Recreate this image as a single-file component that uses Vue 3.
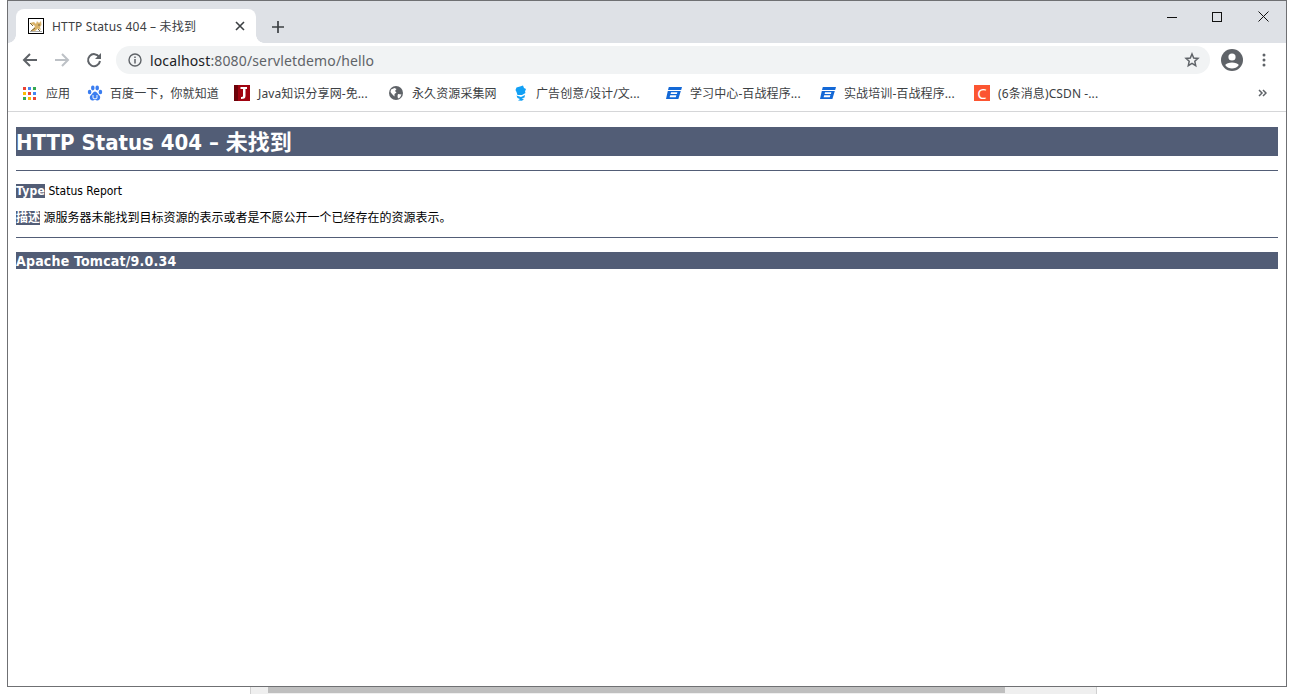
<script setup>
const bookmarks = [
  { id: 'apps', label: '应用', width: 64, gap: 7 },
  { id: 'paw', label: '百度一下，你就知道', width: 147, gap: 7 },
  { id: 'j', label: 'Java知识分享网-免...', width: 155, gap: 8 },
  { id: 'globe', label: '永久资源采集网', width: 125, gap: 7 },
  { id: 'bird', label: '广告创意/设计/文...', width: 152, gap: 6 },
  { id: 'bz', label: '学习中心-百战程序...', width: 154, gap: 8 },
  { id: 'bz', label: '实战培训-百战程序...', width: 154, gap: 8 },
  { id: 'c', label: '(6条消息)CSDN -...', width: 154, gap: 8 },
]
const appColors = ['#ea4335', '#4285f4', '#34a853', '#fbbc05', '#ea4335', '#4285f4', '#34a853', '#fbbc05', '#ea4335']
</script>

<template>
  <div class="screen">
    <div class="window">
      <div class="tabstrip">
        <div class="tab">
          <svg class="favicon" width="16" height="16" viewBox="0 0 16 16">
            <rect x="0.5" y="0.5" width="15" height="15" fill="#fff" stroke="#000" />
            <path d="M2 5 L6 4 L8 6 L9 3 L10 4.5 L12 4.5 L13 2.5 L13.5 7 L12 9 L13 12 L10 10.5 L7 13 L3 13 L6 10 L7 8 Z" fill="#d9b36a" />
            <path d="M2 5 L5 8 M10 7 L12 7 M3 13 L7 10 M10 11 L12 13" stroke="#7a6638" stroke-width="1" fill="none" />
            <path d="M2 13.5 L14 13.5" stroke="#aaa" />
          </svg>
          <span class="tab-title">HTTP Status 404 – 未找到</span>
          <svg class="tab-close" width="10" height="10" viewBox="0 0 10 10">
            <path d="M1 1 L9 9 M9 1 L1 9" stroke="#3c4043" stroke-width="1.6" />
          </svg>
        </div>
        <svg class="new-tab" width="12" height="12" viewBox="0 0 12 12">
          <path d="M6 0 V12 M0 6 H12" stroke="#3c4043" stroke-width="1.7" />
        </svg>
        <div class="win-controls">
          <svg width="10" height="10" viewBox="0 0 10 10"><path d="M0 5.5 H10" stroke="#111" /></svg>
          <svg width="10" height="10" viewBox="0 0 10 10"><rect x="0.5" y="0.5" width="9" height="9" fill="none" stroke="#111" /></svg>
          <svg width="11" height="11" viewBox="0 0 11 11"><path d="M0.5 0.5 L10.5 10.5 M10.5 0.5 L0.5 10.5" stroke="#111" /></svg>
        </div>
      </div>

      <div class="toolbar">
        <svg class="nav" width="16" height="16" viewBox="0 0 16 16">
          <path d="M15 8 H2 M8 2 L2 8 L8 14" fill="none" stroke="#5f6368" stroke-width="2" />
        </svg>
        <svg class="nav" width="16" height="16" viewBox="0 0 16 16">
          <path d="M1 8 H14 M8 2 L14 8 L8 14" fill="none" stroke="#bdc1c6" stroke-width="2" />
        </svg>
        <svg class="nav" width="16" height="16" viewBox="0 0 16 16">
          <path d="M13.2 5 A6 6 0 1 0 14 9" fill="none" stroke="#5f6368" stroke-width="2" />
          <path d="M15 1 V7 H9 Z" fill="#5f6368" />
        </svg>
        <div class="omnibox">
          <svg width="14" height="14" viewBox="0 0 14 14">
            <circle cx="7" cy="7" r="6" fill="none" stroke="#5f6368" stroke-width="1.4" />
            <path d="M7 6 V10.5 M7 3.4 V5" stroke="#5f6368" stroke-width="1.5" />
          </svg>
          <span class="url"><span class="host">localhost</span>:8080/servletdemo/hello</span>
          <svg class="star" width="16" height="16" viewBox="0 0 16 16">
            <path d="M8 2 L9.7 6 L14 6.4 L10.8 9.3 L11.7 13.6 L8 11.3 L4.3 13.6 L5.2 9.3 L2 6.4 L6.3 6 Z" fill="none" stroke="#5f6368" stroke-width="1.5" />
          </svg>
        </div>
        <svg class="avatar" width="22" height="22" viewBox="0 0 22 22">
          <circle cx="11" cy="11" r="11" fill="#5f6368" />
          <circle cx="11" cy="8" r="3.6" fill="#fff" />
          <path d="M4.2 16 C6 12.6 16 12.6 17.8 16 C16 18.6 13.5 19.5 11 19.5 C8.5 19.5 6 18.6 4.2 16 Z" fill="#fff" />
        </svg>
        <svg class="menu" width="4" height="14" viewBox="0 0 4 14">
          <circle cx="2" cy="2" r="1.5" fill="#5f6368" />
          <circle cx="2" cy="7" r="1.5" fill="#5f6368" />
          <circle cx="2" cy="12" r="1.5" fill="#5f6368" />
        </svg>
      </div>

      <div class="bookmarks">
        <div v-for="(b, i) in bookmarks" :key="i" class="bookmark" :style="{ width: b.width + 'px' }">
          <span class="bm-icon" :style="{ marginRight: b.gap + 'px' }">
            <span v-if="b.id === 'apps'" class="apps">
              <i v-for="(c, k) in appColors" :key="k" :style="{ background: c }"></i>
            </span>
            <svg v-else-if="b.id === 'paw'" width="16" height="16" viewBox="0 0 16 16">
              <g fill="#3a7df0">
                <ellipse cx="2.6" cy="7" rx="1.8" ry="2.3" />
                <ellipse cx="5.8" cy="3" rx="1.8" ry="2.4" />
                <ellipse cx="10.2" cy="3" rx="1.8" ry="2.4" />
                <ellipse cx="13.4" cy="7" rx="1.8" ry="2.3" />
                <path d="M8 6.5 C10 6.5 10.5 9 12.5 10.5 C14 12 13 15.5 10.5 15.5 C9.5 15.5 9 15 8 15 C7 15 6.5 15.5 5.5 15.5 C3 15.5 2 12 3.5 10.5 C5.5 9 6 6.5 8 6.5 Z" />
              </g>
              <path d="M6 10 V12.5 C6 14.4 10 14.4 10 12.5 V10" fill="none" stroke="#d6e4fc" stroke-width="1.2" />
            </svg>
            <svg v-else-if="b.id === 'j'" width="16" height="16" viewBox="0 0 16 16">
              <rect width="16" height="16" fill="#a00310" />
              <rect width="4" height="16" fill="#6d0209" />
              <path d="M6.5 2 H13 V4 H11.5 V11 C11.5 13.4 9.8 14 7 14 V12 C8.6 12 9 11.6 9 10.5 V4 H6.5 Z" fill="#fff" />
            </svg>
            <svg v-else-if="b.id === 'globe'" width="14" height="14" viewBox="0 0 14 14">
              <circle cx="7" cy="7" r="7" fill="#5f6368" />
              <path d="M2 3.5 L5.5 2 L7.5 3 L6 5 L7.5 6.5 L5.5 8 L5.5 10.5 L3 8 L1.5 6 Z M9 8 L12.5 8.5 L11 11.5 L9 12.5 L8.5 10 Z" fill="#fff" />
            </svg>
            <svg v-else-if="b.id === 'bird'" width="16" height="16" viewBox="0 0 16 16">
              <path d="M2.5 2.5 L6 1.5 L9 0.5 L10 3 L12 4 L11 6.5 L11.5 8 L8 10 L3.5 10 L2.5 7 L1.5 5 Z" fill="#12a0f5" />
              <path d="M2.5 10.5 L7 12 L11 10 L10.5 12.5 L7.5 13.5 L10 14 L8 15.8 L4 15.5 L6 14 L3.5 13 Z" fill="#12a0f5" />
            </svg>
            <svg v-else-if="b.id === 'bz'" width="16" height="16" viewBox="0 0 16 16">
              <path d="M2.8 2 H16 L15.2 5 H2 Z M1.8 6 H14.8 L12.4 14 H0 Z" fill="#1368d6" />
              <path d="M5 7.3 H11.4 L10.9 8.9 H4.6 Z M4.2 10.3 H10.4 L9.8 12.2 H3.6 Z" fill="#fff" />
            </svg>
            <span v-else class="csdn">C</span>
          </span>
          <span class="bm-label">{{ b.label }}</span>
        </div>
        <svg class="more" width="9" height="8" viewBox="0 0 9 8">
          <path d="M1 1 L4 4 L1 7 M5 1 L8 4 L5 7" fill="none" stroke="#5f6368" stroke-width="1.5" />
        </svg>
      </div>

      <div class="page">
        <h1>HTTP Status 404 – 未找到</h1>
        <hr />
        <p class="type"><b>Type</b> Status Report</p>
        <p class="desc"><b>描述</b> 源服务器未能找到目标资源的表示或者是不愿公开一个已经存在的资源表示。</p>
        <hr class="foot" />
        <h3>Apache Tomcat/9.0.34</h3>
      </div>
    </div>

    <div class="behind-scroll">
      <span class="thumb"></span>
    </div>
  </div>
</template>

<style>
html, body { margin: 0; background: #fff; overflow: hidden; }
</style>

<style scoped>
.screen {
  width: 1294px;
  height: 694px;
  background: #fff;
  overflow: hidden;
  font-family: "Noto Sans", "Noto Sans CJK SC", sans-serif;
}
.window {
  box-sizing: border-box;
  width: 1280px;
  height: 687px;
  margin-left: 7px;
  border: 1px solid #6f7073;
  background: #fff;
  display: flex;
  flex-direction: column;
}
.tabstrip {
  height: 42px;
  background: #dee1e6;
  display: flex;
  align-items: flex-end;
  padding-left: 8px;
  flex: none;
}
.tab {
  width: 240px;
  height: 34px;
  background: #fff;
  border-radius: 8px 8px 0 0;
  display: flex;
  align-items: center;
  padding: 0 11px 0 12px;
  box-sizing: border-box;
  position: relative;
}
.tab::before, .tab::after {
  content: "";
  position: absolute;
  bottom: 0;
  width: 8px;
  height: 8px;
}
.tab::before { left: -8px; background: radial-gradient(circle at 0 0, #dee1e6 7.5px, #fff 8px); }
.tab::after { right: -8px; background: radial-gradient(circle at 100% 0, #dee1e6 7.5px, #fff 8px); }
.favicon { flex: none; }
.tab-title {
  margin-left: 8px;
  font-size: 12px;
  letter-spacing: 0.2px;
  color: #3c4043;
  white-space: nowrap;
  flex: 1;
}
.tab-close { flex: none; }
.new-tab { margin: 0 0 10px 16px; flex: none; }
.win-controls {
  margin-left: auto;
  align-self: flex-start;
  display: flex;
  align-items: center;
  gap: 35px;
  padding: 10px 17px 0 0;
}
.win-controls svg:not(:last-child) { position: relative; left: -1px; }
.toolbar {
  height: 34px;
  flex: none;
  display: flex;
  align-items: center;
  padding-left: 14px;
  background: #fff;
}
.nav { flex: none; margin-right: 16px; }
.omnibox {
  width: 1094px;
  height: 28px;
  margin-left: -2px;
  border-radius: 14px;
  background: #f1f3f4;
  display: flex;
  align-items: center;
  padding: 0 10px 0 12px;
  box-sizing: border-box;
  flex: none;
}
.url {
  margin-left: 8px;
  font-size: 14px;
  line-height: 20px;
  padding-top: 2px;
  letter-spacing: 0.14px;
  color: #5f6368;
  white-space: nowrap;
}
.host { color: #202124; }
.star { margin-left: auto; flex: none; }
.avatar { margin-left: 11px; flex: none; }
.menu { margin-left: 19px; flex: none; }
.bookmarks {
  height: 35px;
  flex: none;
  box-sizing: border-box;
  border-bottom: 1px solid #d5d6d8;
  padding: 0 0 2px 15px;
  display: flex;
  align-items: center;
  position: relative;
}
.bookmark {
  display: flex;
  align-items: center;
  flex: none;
  box-sizing: border-box;
  height: 20px;
}
.bm-icon {
  width: 16px;
  height: 16px;
  display: flex;
  align-items: center;
  justify-content: flex-start;
  flex: none;
}
.bm-label {
  font-size: 12px;
  letter-spacing: 0.1px;
  color: #3c4043;
  white-space: nowrap;
}
.apps {
  display: grid;
  grid-template-columns: repeat(3, 3px);
  grid-auto-rows: 3px;
  gap: 2px;
}
.apps i { display: block; }
.csdn {
  width: 16px;
  height: 16px;
  background: #fc5531;
  color: #fff;
  font-size: 15px;
  line-height: 16px;
  text-align: center;
}
.more {
  position: absolute;
  right: 19px;
  top: 12px;
}
.page {
  flex: 1;
  padding: 15px 0 0 8px;
  width: 1262px;
  font-family: "DejaVu Sans", "Noto Sans CJK SC", sans-serif;
  font-stretch: condensed;
}
h1 {
  margin: 0;
  font-size: 22px;
  line-height: 31px;
  height: 29px;
  font-weight: 700;
  color: #fff;
  background: #525d76;
  white-space: nowrap;
}
hr {
  height: 1px;
  border: 0;
  margin: 14px 0 12px;
  background: #525d76;
}
hr.foot { margin: 11px 0 14px; }
p {
  margin: 0;
  font-size: 12px;
  line-height: 15px;
  padding-top: 1px;
  color: #000;
  white-space: nowrap;
}
p.type { margin-bottom: 11px; }
p.type b { letter-spacing: 0.25px; }
p b { color: #fff; background: #525d76; }
h3 {
  margin: 0;
  font-size: 14px;
  line-height: 19px;
  height: 17px;
  font-weight: 700;
  letter-spacing: 0.2px;
  color: #fff;
  background: #525d76;
  white-space: nowrap;
}
.behind-scroll {
  width: 847px;
  height: 7px;
  margin-left: 250px;
  box-sizing: border-box;
  padding-left: 17px;
  background: #efefef;
  border-left: 1px solid #d0d0d0;
  border-right: 1px solid #d0d0d0;
}
.thumb {
  display: block;
  width: 737px;
  height: 6px;
  background: #bfbfbf;
}
</style>
